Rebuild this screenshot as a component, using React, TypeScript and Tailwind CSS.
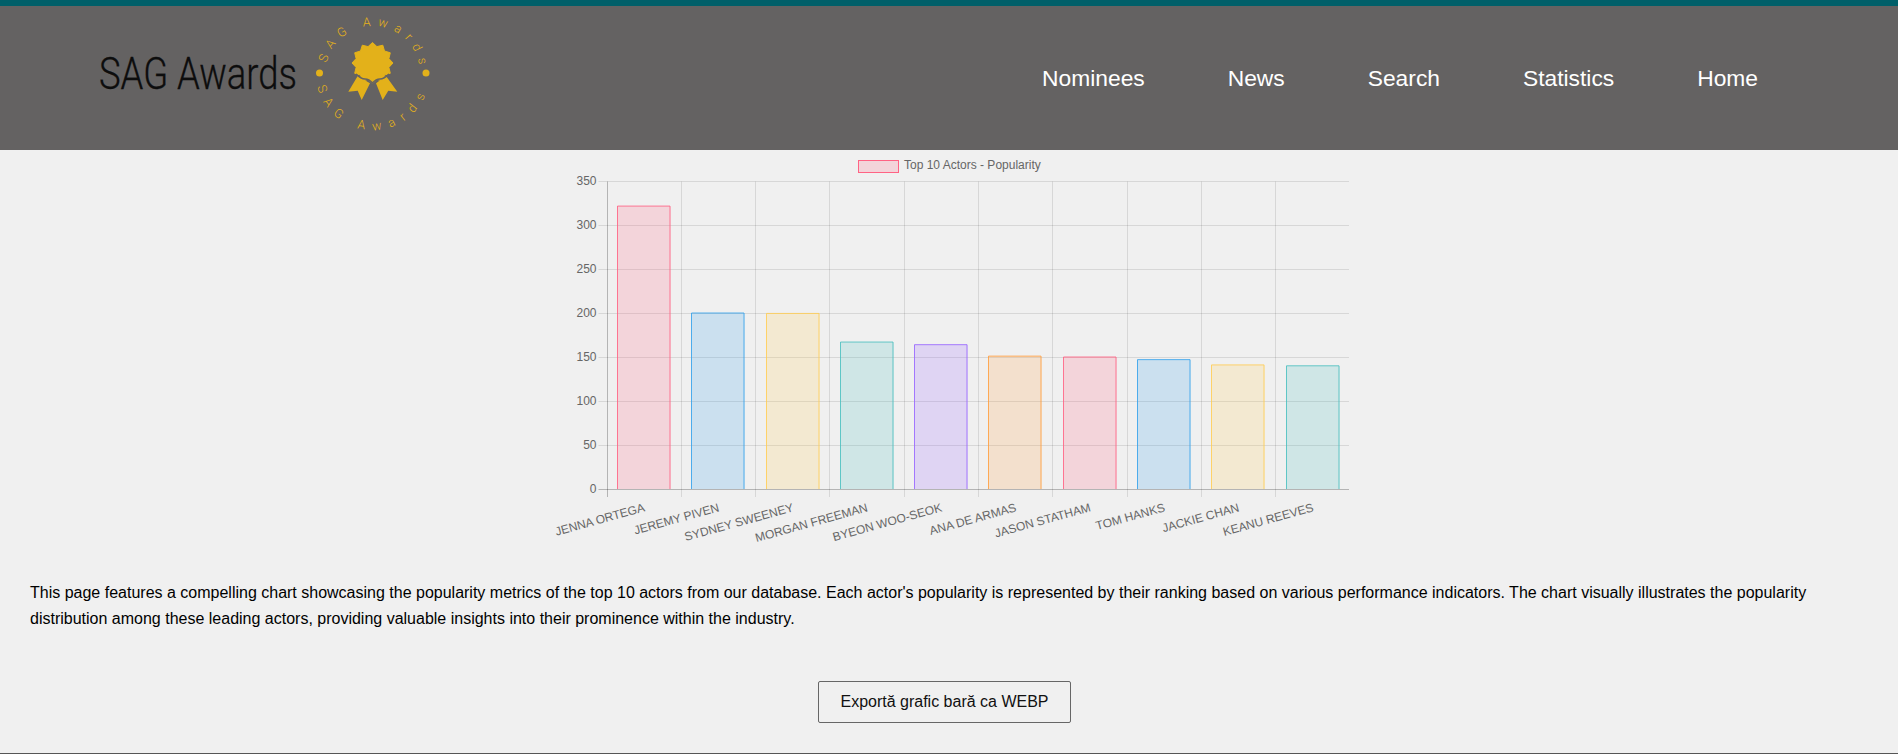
const navLinks = ["Nominees", "News", "Search", "Statistics", "Home"];

const actors = [
  { name: "JENNA ORTEGA", value: 321.5, color: "255,99,132" },
  { name: "JEREMY PIVEN", value: 200, color: "54,162,235" },
  { name: "SYDNEY SWEENEY", value: 199.5, color: "255,206,86" },
  { name: "MORGAN FREEMAN", value: 167, color: "75,192,192" },
  { name: "BYEON WOO-SEOK", value: 164, color: "153,102,255" },
  { name: "ANA DE ARMAS", value: 151, color: "255,159,64" },
  { name: "JASON STATHAM", value: 150, color: "255,99,132" },
  { name: "TOM HANKS", value: 147, color: "54,162,235" },
  { name: "JACKIE CHAN", value: 141, color: "255,206,86" },
  { name: "KEANU REEVES", value: 140, color: "75,192,192" },
];

const yTicks = [0, 50, 100, 150, 200, 250, 300, 350];

// chart coordinates, canvas is 800x400
const left = 57.5;
const right = 800.5;
const zero = 339;
const unit = 0.88;
const step = (right - left) / 10;
const barWidth = 53.5;
const font = "'Liberation Sans', Arial, sans-serif";

function rosettePoints(cx: number, cy: number, outer: number, inner: number, n: number) {
  const pts: string[] = [];
  for (let i = 0; i < n * 2; i++) {
    const r = i % 2 === 0 ? outer : inner;
    const a = (Math.PI * i) / n - Math.PI / 2;
    pts.push(`${(cx + r * Math.cos(a)).toFixed(1)},${(cy + r * Math.sin(a)).toFixed(1)}`);
  }
  return pts.join(" ");
}

function Logo() {
  return (
    <svg viewBox="90 6 350 144" className="h-[144px] w-[350px] shrink-0">
      <text
        x="99"
        y="88.5"
        fontSize="44"
        fill="#0d0d0d"
        fontFamily="Roboto, sans-serif"
        fontWeight="300"
        stroke="#0d0d0d"
        strokeWidth="0.3"
        textLength="198"
        lengthAdjust="spacingAndGlyphs"
      >
        SAG Awards
      </text>
      <defs>
        <path id="ringTop" d="M 325.7 73 A 47 47 0 0 1 419.7 73" />
        <path id="ringBottom" d="M 315.7 73 A 57 57 0 0 0 429.7 73" />
      </defs>
      <g fill="#e3b11a" fontFamily="Roboto, sans-serif" fontSize="12.5" fontWeight="300">
        <text letterSpacing="6.8">
          <textPath href="#ringTop" startOffset="10">
            SAG Awards
          </textPath>
        </text>
        <text letterSpacing="8.2">
          <textPath href="#ringBottom" startOffset="14">
            SAG Awards
          </textPath>
        </text>
        <circle cx="319.5" cy="73" r="3.5" />
        <circle cx="426" cy="73" r="3.5" />
        <polygon points="357.7,76 370,83.3 361.7,100 357.7,90.7 348.3,91.7" />
        <polygon points="376,83.3 386,76 397.3,91.7 388.3,90.7 382.7,100" />
        <polygon points={rosettePoints(372.5, 63, 20.5, 17, 12)} stroke="#e3b11a" strokeLinejoin="round" />
      </g>
      <path
        d="M 356 74 Q 361 79 365 79 Q 369 79 372.5 83 Q 376 79 380 79 Q 384 79 389 74"
        fill="none"
        stroke="#646262"
        strokeWidth="1.5"
      />
    </svg>
  );
}

function Chart() {
  return (
    <svg viewBox="0 0 800 400" className="mx-auto block h-[400px] w-[800px]">
      <rect x="309.5" y="10.5" width="40" height="12" fill="rgba(255,99,132,0.2)" stroke="rgb(255,99,132)" />
      <text x="355" y="19" fontSize="12" fill="#666" fontFamily={font}>
        Top 10 Actors - Popularity
      </text>

      {yTicks.map((t) => {
        const y = Math.round(zero - t * unit) + 0.5;
        return (
          <g key={t}>
            <line
              x1={left - 8}
              x2={right}
              y1={y}
              y2={y}
              stroke={t === 0 ? "rgba(0,0,0,0.25)" : "rgba(0,0,0,0.1)"}
            />
            <text x={left - 10} y={y + 3} fontSize="12" fill="#666" textAnchor="end" fontFamily={font}>
              {t}
            </text>
          </g>
        );
      })}

      {actors.map((a, i) => {
        const x = Math.round(left + step * i) + 0.5;
        return (
          <line
            key={a.name}
            x1={x}
            x2={x}
            y1={31.5}
            y2={zero + 8}
            stroke={i === 0 ? "rgba(0,0,0,0.25)" : "rgba(0,0,0,0.1)"}
          />
        );
      })}

      {actors.map((a, i) => {
        const cx = left + step * i + step / 2;
        const top = zero - a.value * unit;
        const x = Math.round(cx - barWidth / 2);
        return (
          <g key={a.name}>
            <rect x={x} y={top} width={barWidth} height={zero - top} fill={`rgba(${a.color},0.2)`} />
            <path
              d={`M ${x + 0.5} ${zero} V ${top} H ${x + barWidth - 0.5} V ${zero}`}
              fill="none"
              stroke={`rgba(${a.color},0.85)`}
            />
            <text
              transform={`translate(${cx + 1} 358) rotate(-15.5)`}
              fontSize="12"
              fill="#666"
              textAnchor="end"
              dominantBaseline="middle"
              fontFamily={font}
            >
              {a.name}
            </text>
          </g>
        );
      })}
    </svg>
  );
}

export default function App() {
  return (
    <div className="flex min-h-[754px] flex-col bg-[#f0f0f0] font-['Liberation_Sans',Arial,sans-serif] text-black">
      <header className="flex h-[150px] items-center justify-between border-t-[6px] border-[#005f69] bg-[#646262] pl-[90px] pr-[140px]">
        <Logo />
        <nav className="flex gap-[83px]">
          {navLinks.map((link) => (
            <a key={link} href="#" className="text-[22.8px] text-white">
              {link}
            </a>
          ))}
        </nav>
      </header>

      <Chart />

      <p className="mt-[30px] px-[30px] text-[16px] leading-[25.6px]">
        This page features a compelling chart showcasing the popularity metrics of the top 10 actors from our
        database. Each actor's popularity is represented by their ranking based on various performance indicators.
        The chart visually illustrates the popularity distribution among these leading actors, providing valuable
        insights into their prominence within the industry.
      </p>

      <div className="mt-[50px] flex justify-center pr-[9px]">
        <button className="h-[42px] w-[253px] rounded-[2px] border border-[#666] text-[16px] text-[#111]">
          Exportă grafic bară ca WEBP
        </button>
      </div>

      <div className="mt-auto h-px bg-[#555]" />
    </div>
  );
}
